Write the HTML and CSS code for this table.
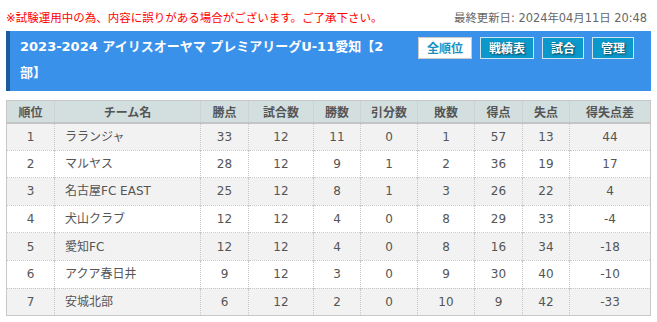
FILE: index.html
```html
<!DOCTYPE html>
<html lang="ja">
<head>
<meta charset="utf-8">
<title>順位表</title>
<link rel="stylesheet" href="styles.css">
</head>
<body>
<div class="page">
  <div class="topbar">
    <p class="notice">※試験運用中の為、内容に誤りがある場合がございます。ご了承下さい。</p>
    <p class="updated">最終更新日: 2024年04月11日 20:48</p>
  </div>
  <div class="league">
    <h1 class="league-title">2023-2024 アイリスオーヤマ プレミアリーグU-11愛知【2部】</h1>
    <nav class="tabs">
      <a class="tab tab-active">全順位</a>
      <a class="tab">戦績表</a>
      <a class="tab">試合</a>
      <a class="tab">管理</a>
    </nav>
  </div>
  <table class="standings">
    <colgroup>
      <col class="c-rank"><col class="c-team"><col class="c-pts"><col class="c-gp"><col class="c-w">
      <col class="c-d"><col class="c-l"><col class="c-gf"><col class="c-ga"><col class="c-gd">
    </colgroup>
    <thead>
      <tr><th>順位</th><th>チーム名</th><th>勝点</th><th>試合数</th><th>勝数</th><th>引分数</th><th>敗数</th><th>得点</th><th>失点</th><th>得失点差</th></tr>
    </thead>
    <tbody>
      <tr><td>1</td><td class="team">ラランジャ</td><td>33</td><td>12</td><td>11</td><td>0</td><td>1</td><td>57</td><td>13</td><td>44</td></tr>
      <tr><td>2</td><td class="team">マルヤス</td><td>28</td><td>12</td><td>9</td><td>1</td><td>2</td><td>36</td><td>19</td><td>17</td></tr>
      <tr><td>3</td><td class="team">名古屋FC EAST</td><td>25</td><td>12</td><td>8</td><td>1</td><td>3</td><td>26</td><td>22</td><td>4</td></tr>
      <tr><td>4</td><td class="team">犬山クラブ</td><td>12</td><td>12</td><td>4</td><td>0</td><td>8</td><td>29</td><td>33</td><td>-4</td></tr>
      <tr><td>5</td><td class="team">愛知FC</td><td>12</td><td>12</td><td>4</td><td>0</td><td>8</td><td>16</td><td>34</td><td>-18</td></tr>
      <tr><td>6</td><td class="team">アクア春日井</td><td>9</td><td>12</td><td>3</td><td>0</td><td>9</td><td>30</td><td>40</td><td>-10</td></tr>
      <tr><td>7</td><td class="team">安城北部</td><td>6</td><td>12</td><td>2</td><td>0</td><td>10</td><td>9</td><td>42</td><td>-33</td></tr>
    </tbody>
  </table>
</div>
</body>
</html>
```

FILE: styles.css
```css
* { box-sizing: border-box; }
html, body { margin: 0; padding: 0; background: #fff; }
body {
  font-family: "DejaVu Sans", "Noto Sans CJK JP", sans-serif;
  font-size: 12px;
  color: #555;
}
.page { padding: 9px 6px 0 6px; }

.topbar {
  display: flex;
  justify-content: space-between;
  align-items: center;
  height: 18px;
  margin-bottom: 4px;
}
.notice {
  margin: 0;
  color: #f00;
  font-size: 11.5px;
  line-height: 18px;
}
.updated {
  margin: 0 4px 0 0;
  color: #666;
  font-size: 11.4px;
  line-height: 18px;
}

.league {
  display: flex;
  align-items: flex-start;
  background: #3a91ea;
  border-left: 4px solid #1c5a9c;
  padding: 3px 17px 5px 10px;
  height: 60px;
}
.league-title {
  margin: 0;
  width: 370px;
  color: #fff;
  font-size: 13px;
  font-weight: bold;
  line-height: 26px;
}
.tabs {
  margin-left: auto;
  margin-top: 3px;
  display: flex;
  gap: 8px;
}
.tab {
  display: block;
  height: 22px;
  padding: 0 8px;
  border: 1px solid #cfe3ee;
  background: #0b98ca;
  color: #fff;
  font-family: "Noto Sans CJK JP", sans-serif;
  font-size: 12px;
  font-weight: bold;
  line-height: 20px;
  text-shadow: 1px 1px 2px rgba(0, 0, 0, 0.6);
  cursor: pointer;
}
.tab-active {
  background: #fff;
  border-color: #cccccc;
  color: #1b8fc1;
  text-shadow: none;
}

.standings {
  margin-top: 9px;
  width: 645px;
  table-layout: fixed;
  border-collapse: collapse;
  border: 1px solid #c8c8c8;
}
.c-rank { width: 48px; }
.c-team { width: 146px; }
.c-pts { width: 48px; }
.c-gp { width: 65px; }
.c-w { width: 47px; }
.c-d { width: 57px; }
.c-l { width: 57px; }
.c-gf { width: 48px; }
.c-ga { width: 47px; }
.c-gd { width: 81px; }

.standings th {
  height: 22px;
  padding: 0;
  background: #d3dfdf;
  color: #555;
  font-family: "Noto Sans CJK JP", sans-serif;
  font-size: 12px;
  font-weight: bold;
  text-align: center;
  border-left: 1px dotted #c8c8c8;
  border-bottom: 2px solid #c4c4c4;
}
.standings td {
  height: 27.6px;
  padding: 0;
  text-align: center;
  border-left: 1px dotted #c8c8c8;
  border-top: 1px dotted #c8c8c8;
  line-height: 16px;
}
.standings th:first-child, .standings td:first-child { border-left: 1px solid #c8c8c8; }
.standings tbody tr:nth-child(odd) { background: #f2f2f2; }
.standings tbody tr:nth-child(even) { background: #fff; }
.standings td.team {
  text-align: left;
  padding-left: 10px;
}
```
